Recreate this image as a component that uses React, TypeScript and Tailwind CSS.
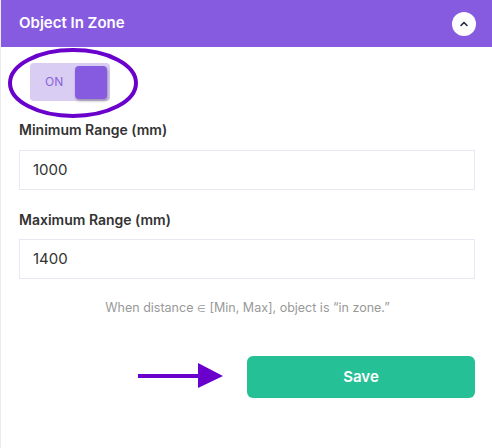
import React from "react";

export default function App() {
  return (
    <div
      className="relative w-[492px] h-[448px] bg-white border-l border-[#ececf0] overflow-hidden"
      style={{ fontFamily: "Inter, 'Noto Sans', sans-serif" }}
    >
      <div className="h-[47px] bg-[#875be0] flex items-center justify-between pl-[18px] pr-[16px]">
        <span className="text-white text-[15px] font-semibold">Object In Zone</span>
        <div className="w-6 h-6 rounded-full bg-white flex items-center justify-center">
          <svg width="10" height="10" viewBox="0 0 10 10" fill="none">
            <path d="M2 6.5 L5 3.5 L8 6.5" stroke="#2a2a3a" strokeWidth="1.6" strokeLinecap="round" strokeLinejoin="round" />
          </svg>
        </div>
      </div>

      <div className="px-[18px] pr-[17px]">
        <div className="mt-[16px] ml-[11px] w-[80px] h-[38px] rounded-[4px] bg-[#dacdf4] flex items-center">
          <span className="ml-[15px] text-[12px] text-[#8a63dc]">ON</span>
          <div className="ml-auto mr-[3px] w-[32px] h-[33px] rounded-[4px] bg-[#875be0] shadow-[1px_2px_3px_rgba(0,0,0,0.3)]" />
        </div>

        <div className="mt-[19px] text-[14px] font-semibold text-[#333] leading-[20px]">Minimum Range (mm)</div>
        <div className="mt-[10px] h-[40px] border border-[#e6e8f2] flex items-center px-[13px] text-[15px] text-[#333]">
          1000
        </div>

        <div className="mt-[20px] text-[14px] font-semibold text-[#333] leading-[20px]">Maximum Range (mm)</div>
        <div className="mt-[9px] h-[40px] border border-[#e6e8f2] flex items-center px-[13px] text-[15px] text-[#333]">
          1400
        </div>

        <div className="mt-[20px] pl-[1px] text-center text-[12.5px] leading-[18px] text-[#999]">
          When distance <span className="text-[10px]">∈</span> [Min, Max], object is “in zone.”
        </div>

        <div className="mt-[39px] flex justify-end">
          <button className="w-[228px] h-[42px] rounded-[6px] bg-[#26c096] text-white text-[15px] font-semibold">
            Save
          </button>
        </div>
      </div>

      <svg className="absolute left-0 top-0 pointer-events-none" width="492" height="448">
        <ellipse cx="72" cy="83" rx="63" ry="33" fill="none" stroke="#6a00cc" strokeWidth="4" />
        <line x1="137" y1="376" x2="200" y2="376" stroke="#6a00cc" strokeWidth="4" />
        <polygon points="197,363 222,376 197,388" fill="#6a00cc" />
      </svg>
    </div>
  );
}
